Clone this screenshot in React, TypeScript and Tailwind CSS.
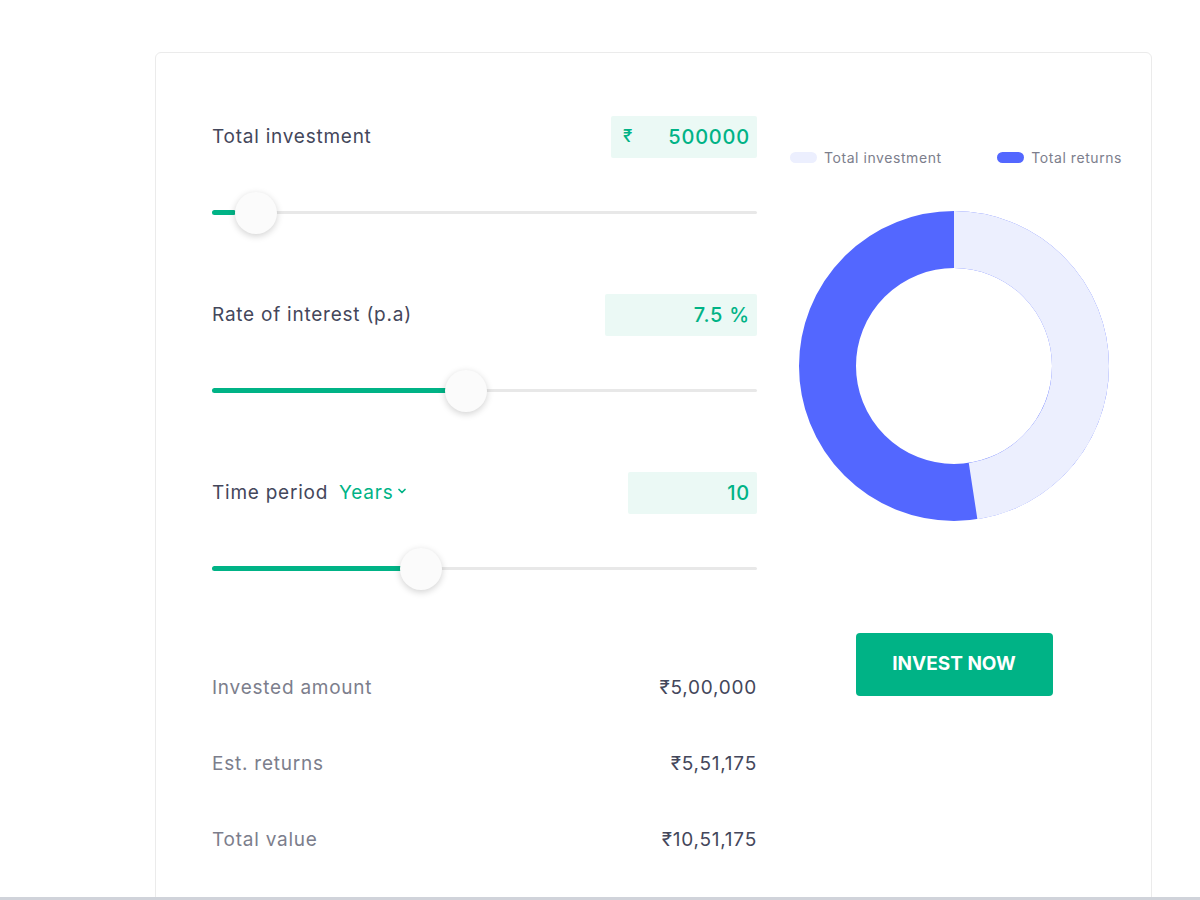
import { ChevronDown } from "lucide-react";

const invested = 500000;
const returns = 551175;

const fields = [
  { label: "Total investment", value: "500000", prefix: "₹", box: "w-[146px]", fill: 24, knob: 44 },
  { label: "Rate of interest (p.a)", value: "7.5 %", box: "w-[152px]", fill: 238, knob: 254 },
  { label: "Time period", value: "10", box: "w-[129px]", fill: 193, knob: 209, unit: "Years" },
];

const results = [
  { label: "Invested amount", value: "₹5,00,000" },
  { label: "Est. returns", value: "₹5,51,175" },
  { label: "Total value", value: "₹10,51,175" },
];

function Slider({ fill, knob }: { fill: number; knob: number }) {
  return (
    <div className="relative mt-[34px] h-[42px]">
      <div className="absolute left-0 right-0 top-[19px] h-[3px] rounded-full bg-[#e8e8e8]" />
      <div className="absolute left-0 top-[18px] h-[5px] rounded-full bg-[#00b386]" style={{ width: fill }} />
      <div
        className="absolute top-0 h-[42px] w-[42px] rounded-full bg-[#fbfbfb] shadow-[0_2px_7px_rgba(0,0,0,0.18)]"
        style={{ left: knob - 21 }}
      />
    </div>
  );
}

function Donut() {
  const r = 126.5;
  const c = 2 * Math.PI * r;
  const part = (invested / (invested + returns)) * c;
  return (
    <svg width="310" height="310" viewBox="0 0 310 310">
      <g transform="rotate(-90 155 155)">
        <circle cx="155" cy="155" r={r} fill="none" stroke="#5367ff" strokeWidth="57" />
        <circle
          cx="155"
          cy="155"
          r={r}
          fill="none"
          stroke="#eceffe"
          strokeWidth="57"
          strokeDasharray={`${part} ${c}`}
        />
      </g>
    </svg>
  );
}

export default function App() {
  return (
    <div className="flex h-[900px] flex-col overflow-hidden bg-white font-['Inter',sans-serif]">
      <div className="flex-1 overflow-hidden pl-[155px] pt-[52px]">
        <div className="flex h-[900px] w-[997px] rounded-[6px] border border-[#ebebeb] pl-[56px] pt-[63px]">
          <div className="w-[545px]">
            {fields.map((f) => (
              <div key={f.label} className="h-[178px]">
                <div className="flex h-[42px] items-center justify-between">
                  <div className="flex items-center text-[19px] tracking-[0.04em] text-[#44475b]">
                    <span>{f.label}</span>
                    {f.unit && (
                      <span className="ml-[11px] flex items-center text-[#00b386]">
                        {f.unit}
                        <ChevronDown className="ml-[3px] h-[12px] w-[12px] -translate-y-[2px]" strokeWidth={3.5} />
                      </span>
                    )}
                  </div>
                  <div
                    className={`flex h-[42px] items-center justify-between rounded-[2px] bg-[#ebf9f5] pl-[12px] pr-[7px] text-[20px] font-medium tracking-[0.04em] text-[#00b386] ${f.box}`}
                  >
                    <span className="text-[17px]">{f.prefix ?? ""}</span>
                    <span>{f.value}</span>
                  </div>
                </div>
                <Slider fill={f.fill} knob={f.knob} />
              </div>
            ))}
            {results.map((r) => (
              <div key={r.label} className="flex h-[76px] items-center justify-between text-[19px] tracking-[0.04em]">
                <span className="text-[#7c7e8c]">{r.label}</span>
                <span className="text-[#44475b]">{r.value}</span>
              </div>
            ))}
          </div>
          <div className="flex flex-1 flex-col items-center pt-[31px]">
            <div className="flex w-full items-center justify-between pl-[33px] pr-[29px] text-[14px] tracking-[0.04em] text-[#7c7e8c]">
              <div className="flex items-center gap-[7px]">
                <span className="h-[11px] w-[27px] rounded-full bg-[#eceffe]" />
                <span>Total investment</span>
              </div>
              <div className="flex items-center gap-[7px]">
                <span className="h-[11px] w-[27px] rounded-full bg-[#5367ff]" />
                <span>Total returns</span>
              </div>
            </div>
            <div className="mt-[43px]">
              <Donut />
            </div>
            <button className="mt-[112px] flex h-[63px] w-[197px] items-center justify-center rounded-[4px] bg-[#00b386] text-[19px] font-bold text-white">
              INVEST NOW
            </button>
          </div>
        </div>
      </div>
      <div className="h-[3px] bg-[#d0d3da]" />
    </div>
  );
}
